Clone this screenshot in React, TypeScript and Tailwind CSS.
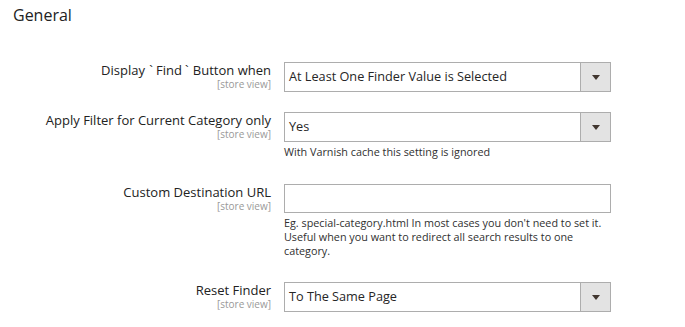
import React from "react";

const font = { fontFamily: '"Open Sans", "Liberation Sans", sans-serif' };

function Arrow() {
  return (
    <div className="flex w-[30px] items-center justify-center self-stretch border-l border-[#adadad] bg-[#e3e3e3]">
      <svg width="8" height="5" viewBox="0 0 8 5">
        <path d="M0 0 H8 L4 5 Z" fill="#41362f" />
      </svg>
    </div>
  );
}

function Select({ value }: { value: string }) {
  return (
    <div className="flex h-[30px] w-[327px] items-stretch border border-[#adadad] bg-white">
      <div className="flex flex-1 items-center pl-[4px] text-[12.7px] text-[#262626]">{value}</div>
      <Arrow />
    </div>
  );
}

function Label({ children }: { children: React.ReactNode }) {
  return (
    <div className="flex w-[271px] flex-col items-end text-right">
      <div className="text-[13px] font-normal leading-[17px] text-[#222222]">{children}</div>
      <div className="text-[10px] leading-[11px] text-[#999999]">[store view]</div>
    </div>
  );
}

function Note({ children }: { children: React.ReactNode }) {
  return <div className="mt-[3px] w-[327px] text-[10.8px] leading-[14px] text-[#303030]">{children}</div>;
}

export default function App() {
  return (
    <div className="h-[327px] w-[685px] bg-white" style={font}>
      <div className="pl-[13px] pt-[5px] text-[16px] font-normal leading-[20px] text-[#222222]">General</div>
      <div className="mt-[37px] flex flex-col">
        <div className="flex items-start gap-[13px]">
          <Label>
            Display <span className="pr-[3px] pl-[1px]">`</span>Find<span className="pl-[3px] pr-[1px]">`</span> Button when
          </Label>
          <Select value="At Least One Finder Value is Selected" />
        </div>
        <div className="mt-[20px] flex items-start gap-[13px]">
          <Label>Apply Filter for Current Category only</Label>
          <div>
            <Select value="Yes" />
            <Note>With Varnish cache this setting is ignored</Note>
          </div>
        </div>
        <div className="mt-[25px] flex items-start gap-[13px]">
          <Label>Custom Destination URL</Label>
          <div>
            <div className="h-[29px] w-[327px] border border-[#adadad] bg-white" />
            <Note>
              Eg. special-category.html In most cases you don't need to set it. Useful when you want to redirect all
              search results to one category.
            </Note>
          </div>
        </div>
        <div className="mt-[24px] flex items-start gap-[13px]">
          <Label>Reset Finder</Label>
          <Select value="To The Same Page" />
        </div>
      </div>
    </div>
  );
}
